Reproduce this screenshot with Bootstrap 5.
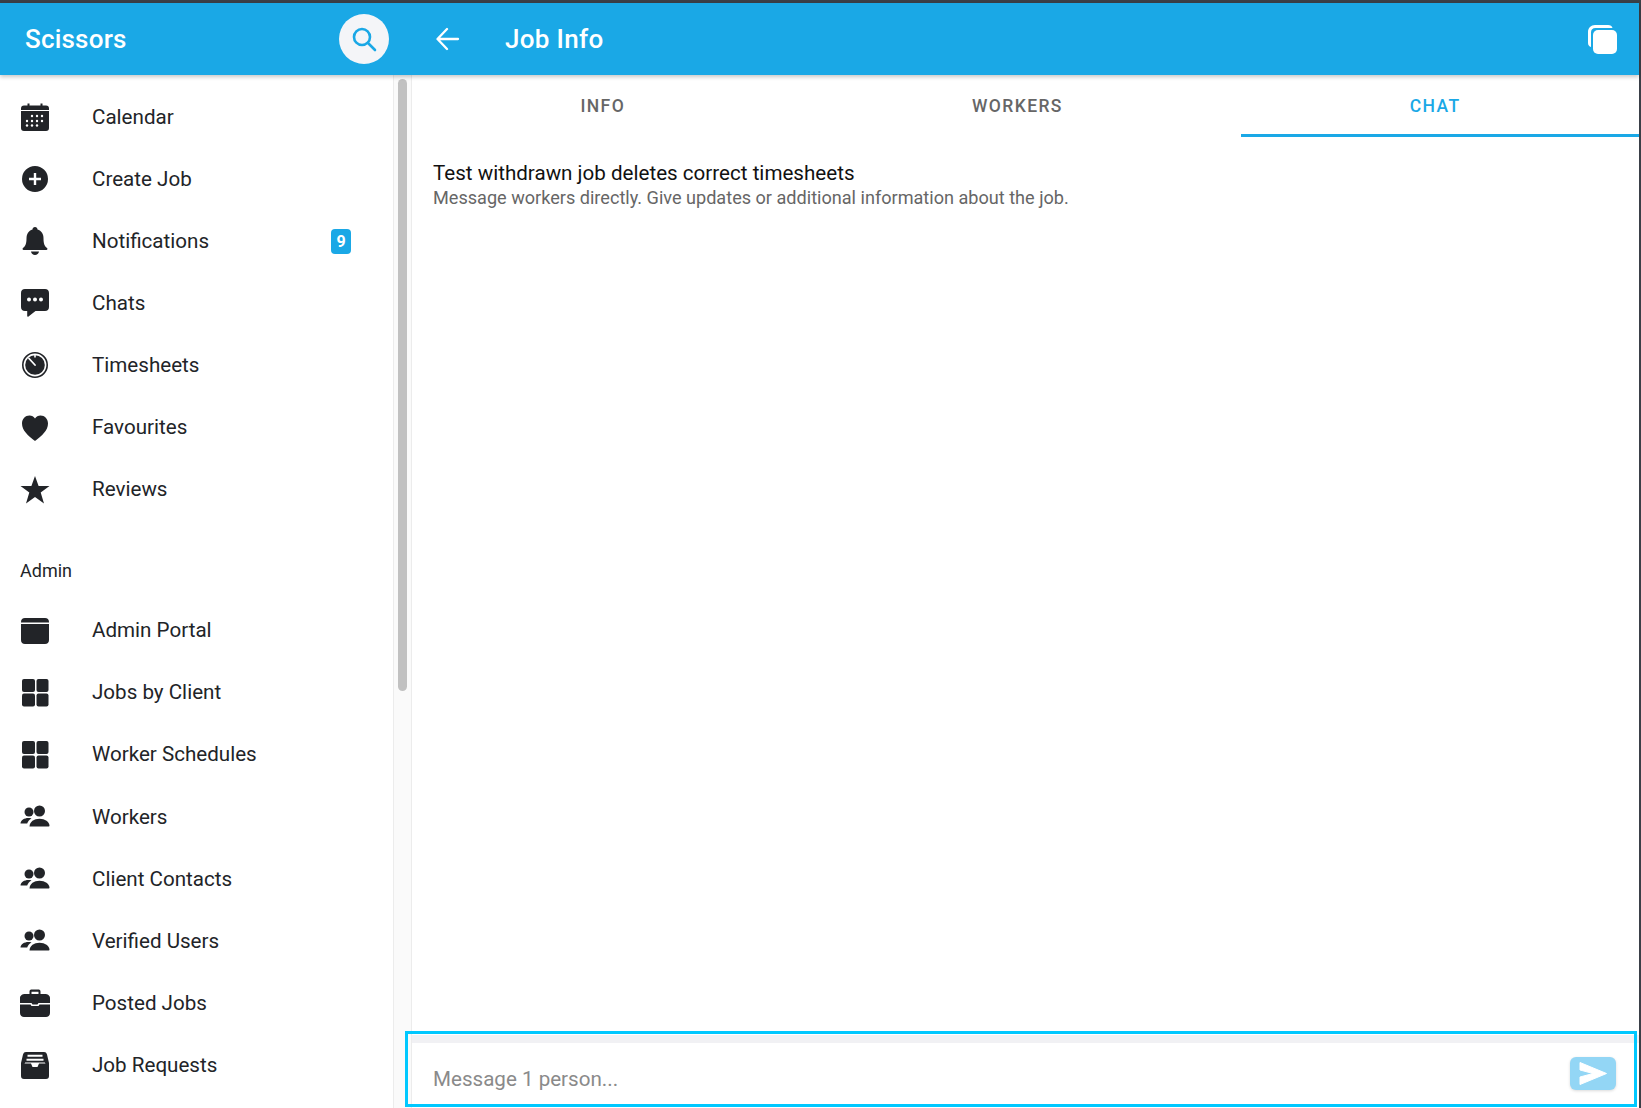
<!DOCTYPE html>
<html lang="en">
<head>
  <meta charset="UTF-8">
  <title>Job Info</title>
  <link href="https://cdn.jsdelivr.net/npm/bootstrap@5.3.2/dist/css/bootstrap.min.css" rel="stylesheet">
  <style>
    html, body { height: 100%; overflow: hidden; }
    body { font-family: Roboto, "Liberation Sans", sans-serif; color: #222428; background: #3a3f47; }
    .app { height: 1108px; padding: 3px 2px 0 0; }
    .app-inner { height: 100%; background: #fff; position: relative; }

    /* header */
    .top-bar { height: 72px; background: #1aa8e6; padding: 0; box-shadow: 0 2px 4px rgba(0,0,0,.22); z-index: 2; flex-wrap: nowrap; }
    .top-left { width: 412px; padding: 0 23px 0 25px; }
    .top-right { padding: 0 22px 0 24px; }
    .brand { font-size: 26px; font-weight: 500; color: #fff; letter-spacing: .2px; padding-top: 1px; }
    .search-btn { width: 50px; height: 50px; background: #f4f5f8; border-radius: 50%; }
    .back-btn { width: 24px; margin-right: 45px; }
    .title { font-size: 26px; font-weight: 500; color: #fff; letter-spacing: .3px; padding-top: 1px; }

    /* sidebar */
    .side { width: 412px; flex: none; height: 100%; overflow: hidden; }
    .side-list { width: 393px; padding-top: 11px; }
    .side-item { height: 62.1px; padding: 0 42px 0 20px; border: 0; font-size: 20.6px; color: #222428; background: #fff; }
    .side-item svg { width: 30px; height: 30px; flex: none; margin-right: 42px; fill: #222428; }
    .side-label { font-size: 18px; color: #222428; padding: 0 20px; margin: 27px 0 0; height: 52px; line-height: 46px; }
    .side-badge { background: #1aa8e6; font-size: 16px; font-weight: 700; width: 20px; height: 25px; line-height: 25px; padding: 0; border-radius: 4px; }
    .rail { width: 19px; flex: none; background: #fafafa; border-left: 1px solid #ececec; border-right: 1px solid #ececec; padding: 4px 4px 0; }
    .rail-thumb { height: 612px; background: #c1c1c1; border-radius: 5px; }

    /* tabs */
    .job-tabs { height: 62px; border-bottom: 0; flex-wrap: nowrap; }
    .job-tabs .nav-link { border: 0; border-radius: 0; height: 62px; padding: 0 10px 4px 0; line-height: 63px; font-size: 17.5px; font-weight: 500; letter-spacing: 1.4px; color: #666; }
    .job-tabs .nav-link.active { color: #1aa8e6; border-bottom: 3px solid #1aa8e6; background: transparent; padding-bottom: 1px; }

    .job-title { font-size: 20.6px; color: #111; line-height: 24px; }
    .job-sub { font-size: 18.1px; color: #666; line-height: 25px; }
    .job-body { padding: 24px 21px; }

    /* composer */
    .composer { height: 73px; border-top: 8px solid #f1f1f4; padding: 0 23px 0 21px; }
    .composer-input { border: 0; padding: 8px 0 0; font-size: 20.6px; box-shadow: none; }
    .composer-input::placeholder { color: #8a8a8a; }
    .send-btn { width: 46px; height: 33px; padding: 0; border: 0; margin-bottom: 4px; background: #93d6f5; border-radius: 6px; box-shadow: 0 1px 3px rgba(0,0,0,.15); }
    .frame { position: absolute; left: 405px; right: 2px; bottom: 1px; height: 76px; border: 3px solid #00c8ff; pointer-events: none; z-index: 3; }
  </style>
</head>
<body>
<svg width="0" height="0" class="d-none">
  <symbol id="i-people" viewBox="0 0 30 30">
    <circle cx="19.500" cy="9" r="5.500"/><circle cx="9" cy="10" r="4.500"/>
    <path d="M9.500 24.500c.2-4.800 4.500-7.700 10-7.700s9.800 2.900 10 7c0 .5-.3.700-.8.700z"/>
    <path d="M.5 21.500c.3-3.400 3.700-5.500 8-5.500 1 0 2 .1 3 .4-2.300 1.300-3.800 3.100-4.300 5.100z"/>
  </symbol>
  <symbol id="i-grid" viewBox="0 0 30 30">
    <rect x="2" y="1" width="13" height="13" rx="2"/><rect x="16.500" y="1" width="12" height="13" rx="2"/>
    <rect x="2" y="15.500" width="13" height="13" rx="2"/><rect x="16.500" y="15.500" width="12" height="13" rx="2"/>
  </symbol>
</svg>

<div class="app">
  <div class="app-inner d-flex flex-column">
    <nav class="navbar top-bar">
      <div class="top-left d-flex align-items-center justify-content-between">
        <span class="brand">Scissors</span>
        <span class="search-btn d-flex align-items-center justify-content-center">
          <svg width="26" height="26" viewBox="0 0 26 26" fill="none" stroke="#1aa8e6" stroke-width="2.600" stroke-linecap="round"><circle cx="11" cy="11" r="8"/><path d="M17 17l7 7"/></svg>
        </span>
      </div>
      <div class="top-right flex-grow-1 d-flex align-items-center">
        <span class="back-btn d-flex">
          <svg width="24" height="24" viewBox="0 0 24 24" fill="none" stroke="#fff" stroke-width="2.300" stroke-linecap="round" stroke-linejoin="round"><path d="M22 12H2M11 2L1.500 12l9.500 10"/></svg>
        </span>
        <span class="title flex-grow-1">Job Info</span>
        <svg width="29" height="29" viewBox="0 0 29 29" fill="#fff"><path d="M7 0h13c2.500 0 4 1.200 4.500 3H7.500C4.500 3 3 4.500 3 7.500V22C1.200 21.500 0 20 0 18V7c0-4 3-7 7-7z"/><rect x="5" y="5" width="24" height="24" rx="5"/></svg>
      </div>
    </nav>

    <div class="d-flex flex-grow-1 overflow-hidden">
      <aside class="side d-flex">
        <div class="side-list">
          <div class="list-group list-group-flush">
            <a class="list-group-item side-item d-flex align-items-center">
              <svg viewBox="0 0 30 30">
                <path d="M7.500 1.500h2v2h11v-2h2v2H26c2 0 3 1 3 3V8H1V6.500c0-2 1-3 3-3h3.500zM1 9h28v17c0 2-1 3-3 3H4c-2 0-3-1-3-3z"/>
                <g fill="#fff"><circle cx="12" cy="14" r="1.200"/><circle cx="17" cy="14" r="1.200"/><circle cx="22" cy="14" r="1.200"/><circle cx="7" cy="19" r="1.200"/><circle cx="12" cy="19" r="1.200"/><circle cx="17" cy="19" r="1.200"/><circle cx="22" cy="19" r="1.200"/><circle cx="7" cy="23.500" r="1.200"/><circle cx="12" cy="23.500" r="1.200"/><circle cx="17" cy="23.500" r="1.200"/></g>
              </svg>
              Calendar
            </a>
            <a class="list-group-item side-item d-flex align-items-center">
              <svg viewBox="0 0 30 30"><path fill-rule="evenodd" d="M15 2a13 13 0 1 0 0 26 13 13 0 0 0 0-26zm-1.200 7h2.400v4.800H21v2.400h-4.800V21h-2.400v-4.800H9v-2.400h4.800z"/></svg>
              Create Job
            </a>
            <a class="list-group-item side-item d-flex align-items-center">
              <svg viewBox="0 0 30 30"><path d="M15 1c1.500 0 2.500 1 2.500 2.500 4 1.200 6 4.500 6 9 0 5 1 7.500 3.500 9.500.8.700.5 2-.7 2H3.700c-1.200 0-1.500-1.300-.7-2 2.500-2 3.500-4.500 3.500-9.500 0-4.500 2-7.800 6-9C12.500 2 13.500 1 15 1zM11 25.500h8c-.3 2-2 3.500-4 3.500s-3.700-1.500-4-3.500z"/></svg>
              Notifications
              <span class="badge side-badge ms-auto">9</span>
            </a>
            <a class="list-group-item side-item d-flex align-items-center">
              <svg viewBox="0 0 30 30"><path fill-rule="evenodd" d="M5 1h20c2.500 0 4 1.500 4 4v14c0 2.500-1.500 4-4 4H15.500L8.500 28.500c-.6.500-1.300.2-1.300-.6V23H5c-2.500 0-4-1.500-4-4V5c0-2.500 1.500-4 4-4zm4 8.500a2 2 0 1 0 0 4 2 2 0 0 0 0-4zm6 0a2 2 0 1 0 0 4 2 2 0 0 0 0-4zm6 0a2 2 0 1 0 0 4 2 2 0 0 0 0-4z"/></svg>
              Chats
            </a>
            <a class="list-group-item side-item d-flex align-items-center">
              <svg viewBox="0 0 30 30">
                <circle cx="15" cy="15" r="12.200" fill="none" stroke="#222428" stroke-width="1.600"/>
                <circle cx="15" cy="15" r="9.800"/>
                <path d="M9 8.500l6 6.500" fill="none" stroke="#fff" stroke-width="1.800" stroke-linecap="round"/>
                <path d="M15 4v3.500" fill="none" stroke="#fff" stroke-width="1.600"/>
              </svg>
              Timesheets
            </a>
            <a class="list-group-item side-item d-flex align-items-center">
              <svg viewBox="0 0 30 30"><path d="M15 28C8 22.500 2 17.500 2 10.500 2 6 5.300 2.500 9.500 2.500c2.300 0 4.300 1 5.500 3 1.200-2 3.200-3 5.500-3C24.700 2.500 28 6 28 10.500 28 17.500 22 22.500 15 28z"/></svg>
              Favourites
            </a>
            <a class="list-group-item side-item d-flex align-items-center">
              <svg viewBox="0 0 30 30"><path d="M15 1l3.600 10.100H29.500l-8.800 6.500L24 28.500l-9-6.600-9 6.600 3.300-10.900L.5 11.100h10.900z"/></svg>
              Reviews
            </a>
          </div>
          <p class="side-label">Admin</p>
          <div class="list-group list-group-flush">
            <a class="list-group-item side-item d-flex align-items-center">
              <svg viewBox="0 0 30 30"><path d="M5 2h20c2.500 0 4 1.500 4 4v.500H1V6c0-2.500 1.500-4 4-4zM1 8h28v16c0 2.500-1.500 4-4 4H5c-2.500 0-4-1.500-4-4z"/></svg>
              Admin Portal
            </a>
            <a class="list-group-item side-item d-flex align-items-center">
              <svg><use href="#i-grid"/></svg>
              Jobs by Client
            </a>
            <a class="list-group-item side-item d-flex align-items-center">
              <svg><use href="#i-grid"/></svg>
              Worker Schedules
            </a>
            <a class="list-group-item side-item d-flex align-items-center">
              <svg><use href="#i-people"/></svg>
              Workers
            </a>
            <a class="list-group-item side-item d-flex align-items-center">
              <svg><use href="#i-people"/></svg>
              Client Contacts
            </a>
            <a class="list-group-item side-item d-flex align-items-center">
              <svg><use href="#i-people"/></svg>
              Verified Users
            </a>
            <a class="list-group-item side-item d-flex align-items-center">
              <svg viewBox="0 0 30 30"><path fill-rule="evenodd" d="M9.500 3.500C9.500 2 10.500 1.500 12 1.500h6c1.500 0 2.500.5 2.500 2V6H25c2.500 0 5 1.500 5 4v5H18.500l-1 1.500h-5l-1-1.500H0v-5c0-2.500 2.500-4 5-4h4.500zm2 .2V6h7V3.700zM0 16.500h10.500l1 1.500h7l1-1.500H30V25c0 2.500-2 4-4 4H4c-2 0-4-1.500-4-4z"/></svg>
              Posted Jobs
            </a>
            <a class="list-group-item side-item d-flex align-items-center">
              <svg viewBox="0 0 30 30"><path fill-rule="evenodd" d="M6 2h18c1.500 0 2.500.8 3 2.500L29 13v13c0 2-1 3-3 3H4c-2 0-3-1-3-3V13l2-8.500C3.500 2.800 4.500 2 6 2zm1.500 2.800v2h15v-2zM6.500 8.800v2h17v-2zM4.500 13.500h6.500l1.500 3.500h5l1.500-3.500h6.500l-.7-1H5.200z"/></svg>
              Job Requests
            </a>
          </div>
        </div>
        <div class="rail"><div class="rail-thumb"></div></div>
      </aside>

      <main class="flex-grow-1 d-flex flex-column">
        <ul class="nav nav-tabs nav-fill job-tabs">
          <li class="nav-item"><a class="nav-link">INFO</a></li>
          <li class="nav-item"><a class="nav-link">WORKERS</a></li>
          <li class="nav-item"><a class="nav-link active">CHAT</a></li>
        </ul>
        <div class="job-body flex-grow-1">
          <div class="job-title">Test withdrawn job deletes correct timesheets</div>
          <div class="job-sub">Message workers directly. Give updates or additional information about the job.</div>
        </div>
        <div class="composer d-flex align-items-center">
          <input class="form-control composer-input" placeholder="Message 1 person...">
          <button class="btn send-btn flex-shrink-0 d-flex align-items-center justify-content-center" type="button">
            <svg width="28" height="23" viewBox="0 0 28 23" fill="#fff"><path d="M1 .5l26.500 11L1 22.500V15l13-3.500L1 8z" stroke="#fff" stroke-linejoin="round"/></svg>
          </button>
        </div>
      </main>
    </div>

    <div class="frame"></div>
  </div>
</div>
<script src="https://cdn.jsdelivr.net/npm/bootstrap@5.3.2/dist/js/bootstrap.bundle.min.js"></script>
</body>
</html>
